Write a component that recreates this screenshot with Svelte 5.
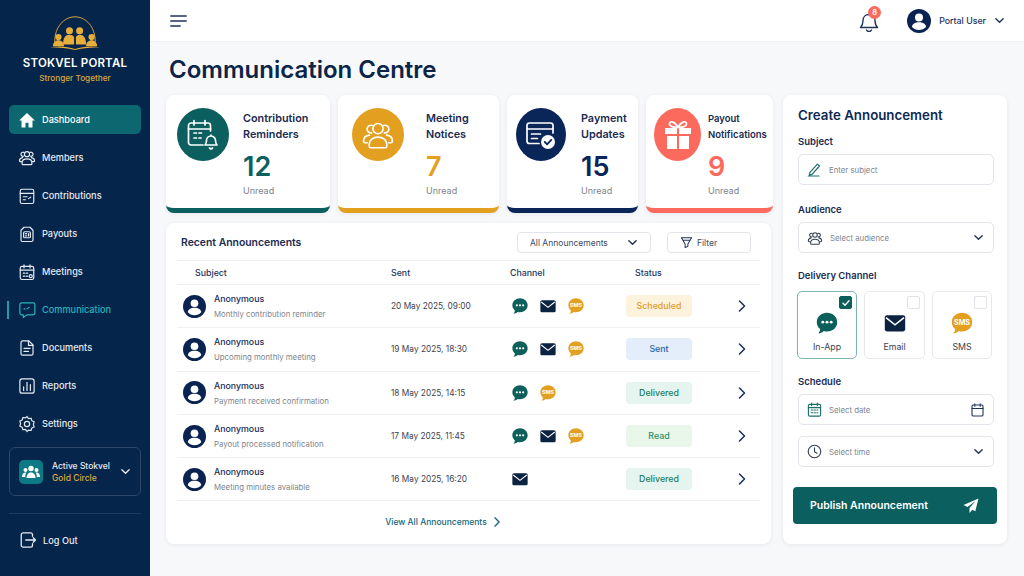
<script>
  const nav = [
    { id: 'home', label: 'Dashboard', active: true },
    { id: 'members', label: 'Members' },
    { id: 'contrib', label: 'Contributions' },
    { id: 'payouts', label: 'Payouts' },
    { id: 'meetings', label: 'Meetings' },
    { id: 'comm', label: 'Communication', current: true },
    { id: 'docs', label: 'Documents' },
    { id: 'reports', label: 'Reports' },
    { id: 'settings', label: 'Settings' }
  ];

  const stats = [
    { tone: 'teal', title: ['Contribution', 'Reminders'], value: 12 },
    { tone: 'gold', title: ['Meeting', 'Notices'], value: 7 },
    { tone: 'navy', title: ['Payment', 'Updates'], value: 15 },
    { tone: 'coral', title: ['Payout', 'Notifications'], value: 9 }
  ];

  const rows = [
    { note: 'Monthly contribution reminder', sent: '20 May 2025, 09:00', channels: ['chat', 'mail', 'sms'], status: 'Scheduled' },
    { note: 'Upcoming monthly meeting', sent: '19 May 2025, 18:30', channels: ['chat', 'mail', 'sms'], status: 'Sent' },
    { note: 'Payment received confirmation', sent: '18 May 2025, 14:15', channels: ['chat', 'sms'], status: 'Delivered' },
    { note: 'Payout processed notification', sent: '17 May 2025, 11:45', channels: ['chat', 'mail', 'sms'], status: 'Read' },
    { note: 'Meeting minutes available', sent: '16 May 2025, 16:20', channels: ['mail'], status: 'Delivered' }
  ];

  const delivery = [
    { id: 'chat', label: 'In-App', on: true },
    { id: 'mail', label: 'Email' },
    { id: 'sms', label: 'SMS' }
  ];
</script>

{#snippet chevron(size = 12)}
  <svg class="chev" width={size} height={size} viewBox="0 0 12 12"><path d="M2 4l4 4 4-4" fill="none" stroke="currentColor" stroke-width="1.5" stroke-linecap="round" stroke-linejoin="round" /></svg>
{/snippet}

{#snippet arrow()}
  <svg width="12" height="14" viewBox="0 0 12 14"><path d="M3.500 2l5 5-5 5" fill="none" stroke="currentColor" stroke-width="1.600" stroke-linecap="round" stroke-linejoin="round" /></svg>
{/snippet}

{#snippet people(size = 18)}
  <svg width={size} height={size} viewBox="0 0 24 24" fill="none" stroke="currentColor" stroke-width="1.6" stroke-linecap="round" stroke-linejoin="round">
    <circle cx="12" cy="7.5" r="3.4" />
    <path d="M5.5 20.5v-1.6c0-3 2.8-5 6.5-5s6.500 2 6.500 5v1.600a1 1 0 0 1-1 .9h-11a1 1 0 0 1-1-.9z" />
    <path d="M7.300 10.300a2.700 2.700 0 1 1 .6-5M16.700 10.300a2.700 2.700 0 1 0-.6-5M4.800 17.500H3.200a1.200 1.200 0 0 1-1.200-1.200c0-2.300 1.700-3.900 4.200-4.200M19.200 17.500h1.600a1.200 1.200 0 0 0 1.200-1.200c0-2.300-1.700-3.900-4.200-4.200" />
  </svg>
{/snippet}

{#snippet navIcon(id)}
  <svg width="18" height="18" viewBox="0 0 24 24" fill="none" stroke="currentColor" stroke-width="1.6" stroke-linecap="round" stroke-linejoin="round">
    {#if id === 'home'}
      <path d="M12 2.500L1.500 12.500h3.200V22h5.300v-6.500h4V22h5.300v-9.500h3.200z" fill="currentColor" stroke="none" />
    {:else if id === 'contrib'}
      <rect x="3" y="3" width="18" height="19" rx="2.500" /><path d="M3 8.500h18M7 13h5M7 17h3M14 15.500l3-2" />
    {:else if id === 'payouts'}
      <path d="M8 3h8l4 4v13a2 2 0 0 1-2 2H6a2 2 0 0 1-2-2V7z" /><rect x="7.500" y="9" width="9" height="8" rx="1.500" /><path d="M10 11.500h1.500M10 14.500h1.500M14 11.500v3" />
    {:else if id === 'meetings'}
      <rect x="3" y="4.500" width="18" height="17.500" rx="2.500" /><path d="M3 9.500h18M8 2.500v4M16 2.500v4M7 13.500h2M11 13.500h2M7 17.500h2M11 17.500h2" /><circle cx="17" cy="17.500" r="2" />
    {:else if id === 'comm'}
      <path d="M5 2.500h15a2.500 2.500 0 0 1 2.500 2.500v11a2.500 2.500 0 0 1-2.500 2.500h-8l-5 3.500v-3.500H5A2.500 2.500 0 0 1 2.500 16V5A2.500 2.500 0 0 1 5 2.500z" /><path d="M8 10.500h1.500M12 10.500l3-2" />
    {:else if id === 'docs'}
      <path d="M6 2.500h8.500L20 8v11.500a2 2 0 0 1-2 2H6a2 2 0 0 1-2-2v-15a2 2 0 0 1 2-2z" /><path d="M14 2.500V8.500h6M8 12.500h8M8 16.500h6" />
    {:else if id === 'reports'}
      <rect x="2.500" y="2.500" width="19" height="19" rx="3" /><path d="M7.500 18v-5M12 18V7M16.500 18V10" />
    {:else if id === 'settings'}
      <circle cx="12" cy="12" r="3.500" /><path d="M12 2l2 2.800 3.400-.5 1 3.300 3.100 1.500-1 3.400 1 3.400-3.100 1.500-1 3.300-3.400-.5L12 22l-2-2.800-3.400.5-1-3.300-3.100-1.500 1-3.400-1-3.400 3.100-1.500 1-3.300 3.400.5z" />
    {/if}
  </svg>
{/snippet}

{#snippet channel(id, size = 18)}
  {#if id === 'chat'}
    <svg width={size} height={size} viewBox="0 0 20 20">
      <path d="M10 1.500c4.700 0 8.500 3.300 8.500 7.800s-3.800 7.700-8.500 7.700c-.9 0-1.800-.1-2.600-.4-1.200 1.200-3 1.900-4.600 1.900 1-1 1.500-2.200 1.500-3.500C2.500 13.500 1.500 11.500 1.500 9.300c0-4.500 3.800-7.800 8.500-7.800z" fill="#0d5f5c" />
      <circle cx="6.500" cy="9.300" r="1.200" fill="#fff" /><circle cx="10" cy="9.300" r="1.200" fill="#fff" /><circle cx="13.500" cy="9.300" r="1.200" fill="#fff" />
    </svg>
  {:else if id === 'mail'}
    <svg width={size} height={size} viewBox="0 0 20 20">
      <rect x="1.500" y="3.500" width="17" height="13.500" rx="1.800" fill="#0b2240" />
      <path d="M2.500 5.500l7.500 6 7.500-6" fill="none" stroke="#fff" stroke-width="1.300" />
    </svg>
  {:else}
    <svg width={size} height={size} viewBox="0 0 20 20">
      <path d="M10 1.500c4.700 0 8.500 3.300 8.500 7.800s-3.800 7.700-8.500 7.700c-.9 0-1.800-.1-2.600-.4-1.200 1.200-3 1.900-4.600 1.900 1-1 1.500-2.200 1.500-3.500C2.500 13.500 1.500 11.500 1.500 9.300c0-4.500 3.800-7.800 8.500-7.800z" fill="#e3a020" />
      <text x="10" y="11.500" text-anchor="middle" font-size="6" font-weight="700" fill="#fff" font-family="Inter, sans-serif">SMS</text>
    </svg>
  {/if}
{/snippet}

{#snippet avatar(size = 24)}
  <svg class="avatar" width={size} height={size} viewBox="0 0 24 24">
    <circle cx="12" cy="12" r="12" fill="#0a2351" />
    <circle cx="12" cy="8.600" r="4" fill="#fff" />
    <path d="M5 18c0-3 3-4.800 7-4.800s7 1.800 7 4.800c-1.700 2-4.200 3-7 3s-5.300-1-7-3z" fill="#fff" />
  </svg>
{/snippet}

{#snippet statIcon(tone)}
  {#if tone === 'teal'}
    <svg width="34" height="34" viewBox="0 0 34 34" fill="none" stroke="#fff" stroke-width="1.700" stroke-linecap="round" stroke-linejoin="round">
      <path d="M17 27H5a2.500 2.500 0 0 1-2.500-2.500V7.500A2.500 2.500 0 0 1 5 5h17a2.500 2.500 0 0 1 2.500 2.500V13" />
      <path d="M2.500 11h22M8 2.500V7M19 2.500V7M8 15h2.500M13 15h2.500M8 20h2.500M13 20h2" />
      <path d="M19 27c1-1 1.500-2 1.500-4.500a4.500 4.500 0 0 1 9 0c0 2.500.5 3.500 1.500 4.500zM23.500 30a1.700 1.700 0 0 0 3 0M25 17v1" />
    </svg>
  {:else if tone === 'gold'}
    <svg width="34" height="34" viewBox="0 0 24 24" fill="none" stroke="#fff" stroke-width="1.150" stroke-linecap="round" stroke-linejoin="round">
      <circle cx="12" cy="7.500" r="3.600" />
      <path d="M5.800 20v-1.500c0-3 2.700-5 6.200-5s6.200 2 6.200 5V20a1 1 0 0 1-1 1H6.800a1 1 0 0 1-1-1z" />
      <path d="M7.500 10.500a2.700 2.700 0 1 1 .4-5.200M16.500 10.500a2.700 2.700 0 1 0-.4-5.200M4.500 17.500H3a1.200 1.200 0 0 1-1.200-1.200c0-2.300 1.700-3.900 4.200-4.200M19.500 17.500H21a1.200 1.200 0 0 0 1.200-1.200c0-2.300-1.700-3.900-4.200-4.200" />
    </svg>
  {:else if tone === 'navy'}
    <svg width="32" height="32" viewBox="0 0 32 32" fill="none" stroke="#fff" stroke-width="1.700" stroke-linecap="round" stroke-linejoin="round">
      <path d="M14 24.500H4.500A2.500 2.500 0 0 1 2 22V6.500A2.500 2.500 0 0 1 4.500 4h21A2.500 2.500 0 0 1 28 6.500V14" />
      <path d="M2 10h26M6.500 15h9M6.500 19.500h6" />
      <circle cx="23" cy="23" r="7" fill="#fff" stroke="none" />
      <path d="M19.800 23l2.300 2.300 4.200-4.400" stroke="#0a2558" stroke-width="1.800" />
    </svg>
  {:else}
    <svg width="28" height="30" viewBox="0 0 28 30" fill="#fff">
      <rect x="1" y="8" width="12" height="6" /><rect x="15" y="8" width="12" height="6" />
      <rect x="3" y="16" width="10" height="13" /><rect x="15" y="16" width="10" height="13" />
      <path d="M14 7.500C11 1.500 6 .5 5.500 3.500 5 6.500 10 7.500 14 7.500zM14 7.500c3-6 8-7 8.500-4 .5 3-4.500 4-8.500 4z" fill="none" stroke="#fff" stroke-width="1.700" />
    </svg>
  {/if}
{/snippet}

<div class="shell">
  <aside class="sidebar">
    <div class="brand">
      <svg width="52" height="35" viewBox="0 0 56 38" fill="#e8ae3a">
        <path d="M6 29C6 13 16 2 28 2s22 11 22 27" fill="none" stroke="#e8ae3a" stroke-width="1" />
        <circle cx="10" cy="24" r="3.400" /><path d="M4 34c0-4 2.500-6.500 6-6.500s6 2.500 6 6.500z" />
        <circle cx="46" cy="24" r="3.400" /><path d="M40 34c0-4 2.500-6.500 6-6.500s6 2.500 6 6.500z" />
        <circle cx="22" cy="17" r="3.800" /><path d="M15 32c0-7 2.500-10.500 7-10.500 2.500 0 4 1 5 2.500v8z" />
        <circle cx="33" cy="17" r="3.800" /><path d="M29 24c1-1.500 2.500-2.500 4-2.500 4.500 0 7 3.500 7 10.500H29z" />
        <path d="M1 35c9-1.500 19-1 27 2 8-3 18-3.500 27-2-9 .3-19 1-27 3-8-2-18-2.700-27-3z" />
      </svg>
      <div class="brand-name">STOKVEL PORTAL</div>
      <div class="brand-tag">Stronger Together</div>
    </div>

    <nav class="nav">
      {#each nav as item}
        <div class="nav-item" class:active={item.active} class:current={item.current}>
          <span class="nav-icon">
            {#if item.id === 'members'}
              {@render people(19)}
            {:else}
              {@render navIcon(item.id)}
            {/if}
          </span>
          <span>{item.label}</span>
        </div>
      {/each}
    </nav>

    <div class="stokvel">
      <span class="stokvel-icon">
        <svg width="18" height="14" viewBox="0 0 18 14" fill="#fff">
          <circle cx="9" cy="3.500" r="2.700" /><path d="M4.500 13c0-3.500 2-5.500 4.500-5.500s4.500 2 4.500 5.500z" />
          <circle cx="3.500" cy="5" r="2" /><path d="M0 12c0-2.800 1.300-4.500 3.500-4.500.4 0 .6 0 .9.100C3.500 8.800 3.200 10.300 3.200 12z" />
          <circle cx="14.500" cy="5" r="2" /><path d="M18 12c0-2.800-1.300-4.500-3.500-4.500-.4 0-.6 0-.9.100.9 1.200 1.200 2.700 1.200 4.400z" />
        </svg>
      </span>
      <div class="stokvel-text">
        <div>Active Stokvel</div>
        <div class="stokvel-name">Gold Circle</div>
      </div>
      {@render chevron(11)}
    </div>

    <div class="logout">
      <svg width="18" height="18" viewBox="0 0 24 24" fill="none" stroke="currentColor" stroke-width="1.700" stroke-linecap="round" stroke-linejoin="round">
        <path d="M18 7V5a2.500 2.500 0 0 0-2.500-2.500h-10A2.500 2.500 0 0 0 3 5v14a2.500 2.500 0 0 0 2.500 2.500h10A2.500 2.500 0 0 0 18 19v-2" />
        <path d="M9 12h13M19 9l3 3-3 3" />
      </svg>
      <span>Log Out</span>
    </div>
  </aside>

  <div class="main">
    <header class="topbar">
      <svg class="burger" width="17" height="12" viewBox="0 0 17 12"><path d="M.8 1h15.400M.8 6h15.400M.8 11h9.400" stroke="#22335a" stroke-width="1.500" stroke-linecap="round" /></svg>
      <div class="top-right">
        <span class="bell">
          <svg width="20" height="22" viewBox="0 0 20 22" fill="none" stroke="#22335a" stroke-width="1.400" stroke-linecap="round" stroke-linejoin="round">
            <path d="M1.500 17.500c1.500-1.500 2.500-3 2.500-7 0-3.500 2.500-6 6-6s6 2.500 6 6c0 4 1 5.500 2.500 7zM7.500 20a2.800 2.800 0 0 0 5 0" />
          </svg>
          <span class="bell-badge">8</span>
        </span>
        <span class="user">
          {@render avatar(24)}
          <span class="user-name">Portal User</span>
          {@render chevron(11)}
        </span>
      </div>
    </header>

    <h1>Communication Centre</h1>

    <div class="content">
      <div class="left">
        <div class="stats">
          {#each stats as stat}
            <div class="stat {stat.tone}">
              <span class="stat-icon">{@render statIcon(stat.tone)}</span>
              <div class="stat-body">
                <div class="stat-title">{stat.title[0]}<br />{stat.title[1]}</div>
                <div class="stat-value">{stat.value}</div>
                <div class="stat-label">Unread</div>
              </div>
            </div>
          {/each}
        </div>

        <section class="table-card">
          <div class="table-head">
            <h2>Recent Announcements</h2>
            <div class="table-tools">
              <div class="tool tool-select"><span>All Announcements</span>{@render chevron(11)}</div>
              <div class="tool tool-filter">
                <svg width="13" height="13" viewBox="0 0 14 14" fill="none" stroke="#22335a" stroke-width="1.100" stroke-linejoin="round"><path d="M1 2h12M2.500 4.500h9M5.500 8.500v4l3-1.500V8.500L12.500 2h-11z" /></svg>
                <span>Filter</span>
              </div>
            </div>
          </div>

          <div class="row columns">
            <span class="col-subject">Subject</span>
            <span>Sent</span>
            <span>Channel</span>
            <span class="col-status">Status</span>
          </div>

          {#each rows as row}
            <div class="row item">
              <div class="who">
                {@render avatar(23)}
                <div>
                  <div class="who-name">Anonymous</div>
                  <div class="who-note">{row.note}</div>
                </div>
              </div>
              <span class="sent-at">{row.sent}</span>
              <span class="channels">
                {#each row.channels as ch}
                  {@render channel(ch)}
                {/each}
              </span>
              <span class="pill {row.status.toLowerCase()}">{row.status}</span>
              <span class="go">{@render arrow()}</span>
            </div>
          {/each}

          <div class="view-all"><span>View All Announcements</span>{@render arrow()}</div>
        </section>
      </div>

      <section class="form-card">
        <h2>Create Announcement</h2>

        <div class="label">Subject</div>
        <div class="field">
          <svg class="tealed" width="15" height="15" viewBox="0 0 18 18" fill="none" stroke="currentColor" stroke-width="1.400" stroke-linecap="round" stroke-linejoin="round"><path d="M3.500 12.500L12.500 2.500l2.500 2.300-9 10-3.200.7zM1.500 16.800h13" /></svg>
          <span>Enter subject</span>
        </div>

        <div class="label">Audience</div>
        <div class="field tight">
          <span class="dark-icon">{@render people(16)}</span>
          <span>Select audience</span>
          <span class="end">{@render chevron(11)}</span>
        </div>

        <div class="label">Delivery Channel</div>
        <div class="options">
          {#each delivery as opt}
            <div class="option" class:on={opt.on}>
              <span class="check">
                {#if opt.on}
                  <svg width="10" height="10" viewBox="0 0 10 10"><path d="M2 5.200l2 2 4-4.400" fill="none" stroke="#fff" stroke-width="1.300" stroke-linecap="round" stroke-linejoin="round" /></svg>
                {/if}
              </span>
              {@render channel(opt.id, 24)}
              <span class="option-label">{opt.label}</span>
            </div>
          {/each}
        </div>

        <div class="label">Schedule</div>
        <div class="field paired">
          <svg class="tealed" width="15" height="15" viewBox="0 0 16 16" fill="none" stroke="currentColor" stroke-width="1.200" stroke-linecap="round"><rect x="1.500" y="2.500" width="13" height="12.500" rx="1.500" /><path d="M1.500 6h13M5 1v3M11 1v3M4.500 8.500h1.500M7.500 8.500H9M10.500 8.500h1M4.500 11.500h1.500M7.500 11.500H9M10.500 11.500h1" /></svg>
          <span>Select date</span>
          <span class="end dark-icon">
            <svg width="13" height="14" viewBox="0 0 13 14" fill="none" stroke="currentColor" stroke-width="1.100" stroke-linecap="round"><rect x="1" y="2" width="11" height="11" rx="1.300" /><path d="M1 5.500h11M3.800 .8v2.400M9.200 .8v2.400" /></svg>
          </span>
        </div>
        <div class="field">
          <span class="dark-icon">
            <svg width="15" height="15" viewBox="0 0 16 16" fill="none" stroke="currentColor" stroke-width="1.200" stroke-linecap="round" stroke-linejoin="round"><circle cx="8" cy="8" r="6.700" /><path d="M8 4v4.300l2.600 1.500" /></svg>
          </span>
          <span>Select time</span>
          <span class="end">{@render chevron(11)}</span>
        </div>

        <div class="publish">
          <span>Publish Announcement</span>
          <svg width="16" height="16" viewBox="0 0 16 16" fill="#fff"><path d="M15.500 .5L.5 7l4 2 8-6-6 7v5l2.800-3.300 3 1.500z" /></svg>
        </div>
      </section>
    </div>
  </div>
</div>

<style>
  :global(body) {
    margin: 0;
    background: #f7f8fa;
    font-family: Inter, "Noto Sans", sans-serif;
  }

  .shell {
    display: flex;
    width: 1024px;
    height: 576px;
    overflow: hidden;
  }

  /* sidebar */
  .sidebar {
    width: 150px;
    flex-shrink: 0;
    box-sizing: border-box;
    padding: 15px 9px 0;
    background: #05254b;
    color: #e6ebf2;
    display: flex;
    flex-direction: column;
  }

  .brand {
    height: 90px;
    display: flex;
    flex-direction: column;
    align-items: center;
  }

  .brand-name {
    margin-top: 5px;
    font-size: 11.500px;
    font-weight: 600;
    letter-spacing: 0.2px;
    line-height: 16px;
    color: #fff;
  }

  .brand-tag {
    margin-top: 1px;
    font-size: 8.200px;
    font-weight: 500;
    line-height: 12px;
    color: #dca83e;
  }

  .nav {
    display: flex;
    flex-direction: column;
    gap: 9px;
  }

  .nav-item {
    position: relative;
    height: 29px;
    padding-left: 9px;
    display: flex;
    align-items: center;
    gap: 6px;
    font-size: 9.200px;
    font-weight: 500;
    border-radius: 5px;
  }

  .nav-icon {
    display: flex;
    width: 18px;
    justify-content: center;
  }

  .nav-item.active {
    background: #0c6770;
    color: #fff;
  }

  .nav-item.current {
    color: #2bb3b8;
  }

  .nav-item.current::before {
    content: '';
    position: absolute;
    left: -2px;
    top: 6px;
    width: 2px;
    height: 18px;
    background: #1f9ea3;
  }

  .stokvel {
    margin-top: 9px;
    height: 49px;
    flex-shrink: 0;
    box-sizing: border-box;
    padding: 0 9px;
    display: flex;
    align-items: center;
    gap: 9px;
    border: 1px solid #2c4668;
    border-radius: 6px;
    font-size: 8.500px;
    font-weight: 500;
    line-height: 12px;
  }

  .stokvel-icon {
    width: 24px;
    height: 24px;
    border-radius: 5px;
    background: #0c7a84;
    display: flex;
    align-items: center;
    justify-content: center;
    flex-shrink: 0;
  }

  .stokvel-text {
    flex: 1;
    white-space: nowrap;
  }

  .stokvel-name {
    color: #dca83e;
  }

  .logout {
    margin-top: 17px;
    padding: 17px 0 0 10px;
    border-top: 1px solid #1e3c60;
    display: flex;
    align-items: center;
    gap: 6px;
    font-size: 9.200px;
    font-weight: 500;
  }

  /* main column */
  .main {
    flex: 1;
    min-width: 0;
  }

  .topbar {
    height: 42px;
    box-sizing: border-box;
    padding-left: 20px;
    display: flex;
    align-items: center;
    justify-content: space-between;
    background: #fff;
    border-bottom: 1px solid #eef0f3;
  }

  .top-right {
    display: flex;
    align-items: center;
    gap: 28px;
    padding-right: 19px;
  }

  .bell {
    position: relative;
    display: flex;
  }

  .bell-badge {
    position: absolute;
    top: -4px;
    left: 9px;
    width: 13px;
    height: 13px;
    border-radius: 50%;
    background: #fb6a5c;
    color: #fff;
    font-size: 7.500px;
    font-weight: 600;
    line-height: 13px;
    text-align: center;
  }

  .user {
    display: flex;
    align-items: center;
    gap: 8px;
    color: #22335a;
  }

  .user-name {
    font-size: 8.800px;
    font-weight: 500;
  }

  h1 {
    margin: 0;
    height: 53px;
    padding-left: 19px;
    box-sizing: border-box;
    font-size: 24px;
    font-weight: 600;
    line-height: 55px;
    color: #0b2447;
  }

  .content {
    display: grid;
    grid-template-columns: 607px 224px;
    gap: 10px;
    padding-left: 16px;
  }

  .left {
    display: flex;
    flex-direction: column;
    gap: 10px;
  }

  /* stat cards */
  .stats {
    display: grid;
    grid-template-columns: 164px 161px 131px 127px;
    gap: 8px;
  }

  .stat {
    height: 118px;
    box-sizing: border-box;
    padding-top: 13px;
    display: flex;
    align-items: flex-start;
    background: #fff;
    border-radius: 8px;
    border-bottom: 5px solid var(--tone);
    box-shadow: 0 1px 4px rgba(20, 35, 60, 0.08);
    --tone: #0b5f5e;
    --pad: 11px;
    --gap: 14px;
    padding-left: var(--pad);
    gap: var(--gap);
  }

  .stat.gold { --tone: #e3a020; --pad: 14px; --gap: 22px; }
  .stat.navy { --tone: #0a2558; --pad: 9px; --gap: 15px; }
  .stat.coral { --tone: #fb6a5c; --pad: 8px; --gap: 7px; }

  .stat-icon {
    width: 52px;
    height: 53px;
    border-radius: 50%;
    background: var(--tone);
    display: flex;
    align-items: center;
    justify-content: center;
    flex-shrink: 0;
  }

  .stat.navy .stat-icon { width: 50px; }
  .stat.coral .stat-icon { width: 47px; }

  .stat-title {
    font-size: 10.800px;
    font-weight: 600;
    line-height: 15.500px;
    color: #1a2b52;
    white-space: nowrap;
    margin-top: 3px;
  }

  .stat.coral .stat-title { font-size: 9.500px; }

  .stat-value {
    margin-top: 10px;
    font-size: 27px;
    font-weight: 600;
    line-height: 30px;
    color: var(--tone);
  }

  .stat-label {
    margin-top: 2px;
    font-size: 9px;
    line-height: 14px;
    color: #7d838d;
  }

  /* announcements table */
  .table-card {
    margin-right: 2px;
    height: 321px;
    box-sizing: border-box;
    padding: 0 11px;
    background: #fff;
    border-radius: 8px;
    box-shadow: 0 1px 4px rgba(20, 35, 60, 0.08);
  }

  .table-head {
    height: 38px;
    box-sizing: border-box;
    padding: 2px 4px 0;
    display: flex;
    align-items: center;
    justify-content: space-between;
    border-bottom: 1px solid #eef0f3;
  }

  h2 {
    margin: 0;
    color: #1a2b52;
    font-size: 10.400px;
    font-weight: 600;
  }

  .table-tools {
    display: flex;
    gap: 16px;
    padding-right: 5px;
  }

  .tool {
    height: 21px;
    box-sizing: border-box;
    display: flex;
    align-items: center;
    border: 1px solid #e1e4e8;
    border-radius: 4px;
    font-size: 8.500px;
    color: #3d4a63;
  }

  .tool-select {
    width: 134px;
    padding: 0 12px;
    justify-content: space-between;
  }

  .tool-select :global(.chev) { color: #22335a; }

  .tool-filter {
    width: 84px;
    padding-left: 12px;
    gap: 4px;
  }

  .row {
    display: grid;
    grid-template-columns: 214px 119px 115px 1fr;
    align-items: center;
    position: relative;
    border-bottom: 1px solid #eef0f3;
  }

  .columns {
    height: 24px;
    box-sizing: border-box;
    font-size: 8.800px;
    font-weight: 500;
    color: #22335a;
  }

  .col-subject { padding-left: 18px; }
  .col-status { padding-left: 10px; }

  .item { height: 43.300px; box-sizing: border-box; }

  .who {
    display: flex;
    align-items: center;
    gap: 8px;
    padding-left: 6px;
  }

  .avatar { flex-shrink: 0; display: block; }

  .who-name {
    font-size: 8.800px;
    font-weight: 500;
    line-height: 13px;
    color: #1a2b52;
  }

  .who-note {
    margin-top: 3px;
    font-size: 7.800px;
    line-height: 12px;
    color: #80858e;
    white-space: nowrap;
  }

  .sent-at {
    font-size: 8.300px;
    color: #3d4350;
  }

  .channels {
    display: flex;
    gap: 10px;
    padding-left: 1px;
  }

  .pill {
    width: 66px;
    height: 22px;
    margin-left: 1px;
    border-radius: 4px;
    font-size: 8.800px;
    font-weight: 500;
    line-height: 22px;
    text-align: center;
  }

  .scheduled { background: #fdf2dc; color: #e09a2a; }
  .pill.sent { background: #e4eefa; color: #2463a8; }
  .delivered { background: #e5f4ee; color: #1b7e68; }
  .read { background: #e9f6ea; color: #2b8f69; }

  .go {
    position: absolute;
    right: 12px;
    top: 50%;
    margin-top: -7px;
    color: #22335a;
    display: flex;
  }

  .view-all {
    height: 42px;
    padding: 0 50px 0 0;
    box-sizing: border-box;
    display: flex;
    align-items: center;
    justify-content: center;
    gap: 5px;
    font-size: 8.500px;
    font-weight: 500;
    color: #12677a;
  }

  .view-all :global(svg) {
    width: 10px;
    height: 12px;
  }

  /* form panel */
  .form-card {
    height: 449px;
    box-sizing: border-box;
    padding: 0 13px 0 15px;
    background: #fff;
    border-radius: 8px;
    box-shadow: 0 1px 4px rgba(20, 35, 60, 0.08);
    display: flex;
    flex-direction: column;
  }

  .form-card h2 {
    height: 39px;
    font-size: 13.300px;
    line-height: 41px;
    color: #0f2a55;
  }

  .label {
    padding-top: 1px;
    margin-bottom: -1px;
    font-size: 9.500px;
    font-weight: 600;
    color: #1a2b52;
    line-height: 14px;
  }

  .field {
    margin: 6px 0 17px;
    height: 31px;
    flex-shrink: 0;
    box-sizing: border-box;
    padding: 0 9px 0 8px;
    display: flex;
    align-items: center;
    gap: 7px;
    border: 1px solid #e2e5e9;
    border-radius: 5px;
    font-size: 7.800px;
    color: #80858e;
  }

  .field.tight { margin-bottom: 15px; }
  .field.paired { margin-bottom: 5px; }

  .tealed { color: #1b6f6c; flex-shrink: 0; }
  .dark-icon { color: #34404f; display: flex; }

  .end {
    margin-left: auto;
    display: flex;
    color: #22335a;
  }

  .options {
    margin: 9px 0 15px -1px;
    display: grid;
    grid-template-columns: 60px 61px 60px;
    gap: 7px;
  }

  .option {
    position: relative;
    height: 68px;
    box-sizing: border-box;
    padding-top: 19px;
    display: flex;
    flex-direction: column;
    align-items: center;
    border: 1px solid #e6e8ec;
    border-radius: 5px;
  }

  .option.on {
    border-color: #7db4b4;
  }

  .check {
    position: absolute;
    top: 4px;
    right: 4px;
    width: 11px;
    height: 11px;
    border: 1px solid #dfe2e6;
    border-radius: 2px;
    display: flex;
    align-items: center;
    justify-content: center;
  }

  .option.on .check {
    background: #0d5f5c;
    border-color: #0d5f5c;
  }

  .option-label {
    margin-top: 6px;
    font-size: 8.800px;
    color: #3d4350;
  }

  .publish {
    margin: 3px -3px 0 -5px;
    height: 37px;
    padding: 0 18px 0 17px;
    display: flex;
    align-items: center;
    justify-content: space-between;
    background: #0b5f5e;
    border-radius: 4px;
    color: #fff;
    font-size: 10.500px;
    font-weight: 600;
  }
</style>
